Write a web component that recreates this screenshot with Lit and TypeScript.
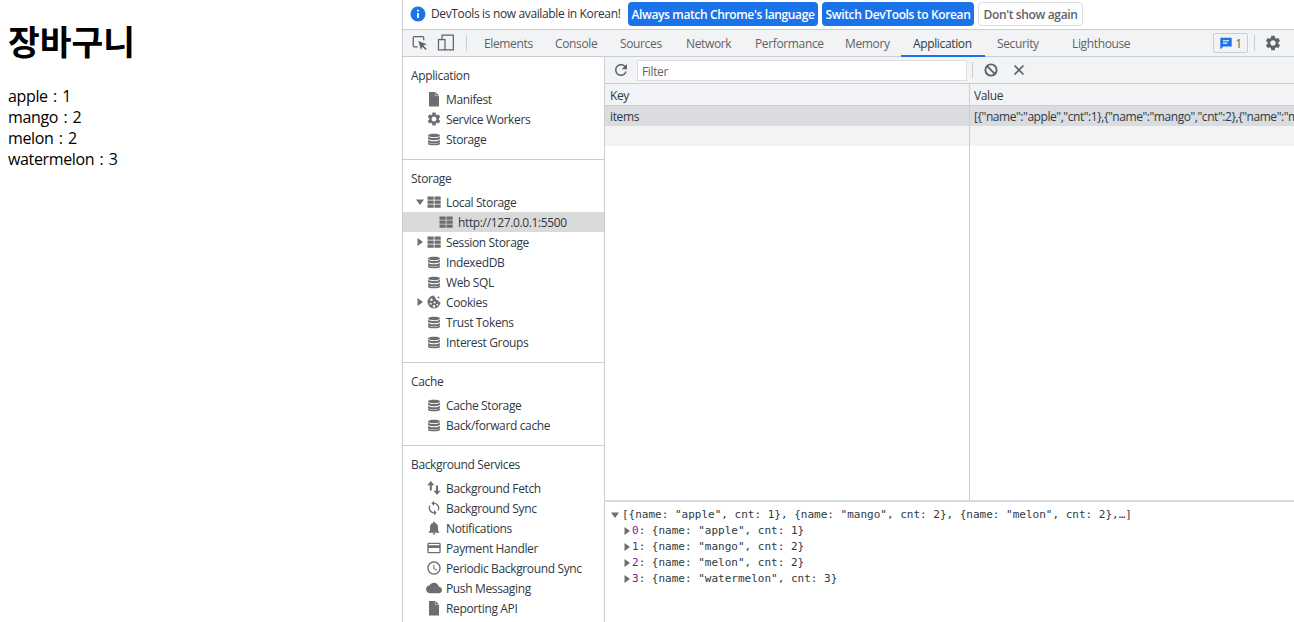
import { LitElement, html, css, svg } from "lit";
import { customElement } from "lit/decorators.js";

const paths: Record<string, any> = {
  doc: svg`<path d="M3 1h6.500L13 4.500V15.500H3z"/><path d="M9.300 1v3.700H13" fill="none" stroke="#fff" stroke-width=".5"/>`,
  db: svg`<g transform="translate(0 1.600) scale(1 .82)"><path d="M2 3.600C2 2.300 4.700 1.500 8 1.500s6 .8 6 2.100S11.300 5.700 8 5.700 2 4.900 2 3.600z"/><path d="M2 5.200C3 6.300 5.600 6.700 8 6.700s5-.4 6-1.500V7.300C14 8.600 11.300 9.400 8 9.400S2 8.600 2 7.300z"/><path d="M2 9C3 10.100 5.600 10.500 8 10.500s5-.4 6-1.500v2.100C14 12.400 11.300 13.200 8 13.200S2 12.400 2 11.100z"/><path d="M2 12.200C3 13.300 5.600 13.700 8 13.700s5-.4 6-1.500v1.400C14 14.900 11.300 15.500 8 15.500S2 14.900 2 13.600z"/></g>`,
  grid: svg`<path d="M1.500 2.500h6.200v3.200H1.500zM8.500 2.500h6.200v3.200H8.500zM1.500 6.500h6.200v3.200H1.500zM8.500 6.500h6.200v3.200H8.500zM1.500 10.500h6.200v3.200H1.500zM8.500 10.500h6.200v3.200H8.500z"/>`,
  cookie: svg`<path fill-rule="evenodd" d="M8 1.500a6.500 6.500 0 1 0 6.500 6.500c-1.500.2-2.500-.7-2.700-1.900C10.400 6.200 9.300 5 9.500 3.500 8.700 3.300 8.200 2.500 8 1.500zM5.500 4.500a1.200 1.200 0 1 1 0 2.400 1.200 1.200 0 0 1 0-2.400zM4.700 8.700a1 1 0 1 1 0 2 1 1 0 0 1 0-2zM8.500 7.500a1 1 0 1 1 0 2 1 1 0 0 1 0-2zM8 11a1.200 1.200 0 1 1 0 2.400A1.200 1.200 0 0 1 8 11zM11.300 9.800a.9.9 0 1 1 0 1.800.9.9 0 0 1 0-1.800z"/><circle cx="12.500" cy="3.500" r="1"/>`,
  updown: svg`<path d="M4.800 1 8.300 5.200H5.800V10.500H3.800V5.200H1.300zM11 15 7.500 10.800H10V5.500H12v5.300H14.500z"/>`,
  sync: svg`<path transform="scale(.667)" d="M12 4V1L8 5l4 4V6c3.310 0 6 2.690 6 6 0 1.010-.25 1.970-.7 2.800l1.460 1.460C19.540 15.030 20 13.570 20 12c0-4.420-3.580-8-8-8zm0 14c-3.310 0-6-2.690-6-6 0-1.010.25-1.970.7-2.800L5.240 7.740C4.460 8.970 4 10.430 4 12c0 4.420 3.580 8 8 8v3l4-4-4-4v3z"/>`,
  bell: svg`<path transform="scale(.667)" d="M12 22c1.100 0 2-.9 2-2h-4c0 1.100.9 2 2 2zm6-6v-5c0-3.070-1.630-5.640-4.500-6.320V4c0-.83-.67-1.500-1.500-1.500s-1.500.67-1.500 1.500v.68C7.640 5.360 6 7.920 6 11v5l-2 2v1h16v-1l-2-2z"/>`,
  card: svg`<path transform="scale(.667)" d="M20 4H4c-1.110 0-1.990.89-1.990 2L2 18c0 1.110.89 2 2 2h16c1.110 0 2-.89 2-2V6c0-1.110-.89-2-2-2zm0 14H4v-6h16v6zm0-10H4V6h16v2z"/>`,
  clock: svg`<path transform="scale(.667)" d="M11.990 2C6.470 2 2 6.480 2 12s4.470 10 9.990 10C17.520 22 22 17.520 22 12S17.520 2 11.990 2zM12 20c-4.420 0-8-3.580-8-8s3.580-8 8-8 8 3.580 8 8-3.580 8-8 8zm.5-13H11v6l5.250 3.150.75-1.230-4.500-2.670z"/>`,
  cloud: svg`<path transform="scale(.667)" d="M19.350 10.040C18.670 6.590 15.640 4 12 4 9.110 4 6.600 5.640 5.350 8.040 2.340 8.360 0 10.910 0 14c0 3.310 2.690 6 6 6h13c2.760 0 5-2.240 5-5 0-2.640-2.050-4.780-4.650-4.960z"/>`,
  gear: svg`<path transform="scale(.667)" d="M19.140 12.940c.04-.3.06-.61.06-.94 0-.32-.02-.64-.07-.94l2.030-1.580c.18-.14.23-.41.12-.61l-1.920-3.320c-.12-.22-.37-.29-.59-.22l-2.390.96c-.5-.38-1.030-.7-1.620-.94l-.36-2.540c-.04-.24-.24-.41-.48-.41h-3.840c-.24 0-.43.17-.47.41l-.36 2.540c-.59.24-1.130.57-1.620.94l-2.390-.96c-.22-.08-.47 0-.59.22L2.740 8.870c-.12.21-.08.47.12.61l2.030 1.580c-.05.3-.09.63-.09.94s.02.64.07.94l-2.030 1.580c-.18.14-.23.41-.12.61l1.920 3.320c.12.22.37.29.59.22l2.390-.96c.5.38 1.030.7 1.620.94l.36 2.540c.05.24.24.41.48.41h3.840c.24 0 .44-.17.47-.41l.36-2.540c.59-.24 1.130-.56 1.620-.94l2.390.96c.22.08.47 0 .59-.22l1.920-3.320c.12-.22.07-.47-.12-.61l-2.010-1.580zM12 15.600c-1.980 0-3.600-1.620-3.600-3.600s1.620-3.600 3.600-3.600 3.600 1.620 3.600 3.600-1.620 3.600-3.600 3.600z"/>`,
  refresh: svg`<path transform="scale(.667)" d="M17.650 6.350C16.200 4.900 14.210 4 12 4c-4.420 0-7.990 3.580-7.990 8s3.570 8 7.990 8c3.730 0 6.840-2.550 7.730-6h-2.080c-.82 2.330-3.040 4-5.650 4-3.310 0-6-2.690-6-6s2.690-6 6-6c1.660 0 3.140.69 4.220 1.780L13 11h7V4l-2.350 2.350z"/>`,
  block: svg`<circle cx="8" cy="8" r="5.600" fill="none" stroke="currentColor" stroke-width="1.900"/><path d="M4.200 4.200 11.800 11.800" stroke="currentColor" stroke-width="1.900"/>`,
  close: svg`<path d="M3.500 3.500 12.500 12.500M12.500 3.500 3.500 12.500" stroke="currentColor" stroke-width="1.700"/>`,
  inspect: svg`<path d="M6 11.500H3a1 1 0 0 1-1-1V3.400a1 1 0 0 1 1-1h7.300a1 1 0 0 1 1 1V5.500" fill="none" stroke="currentColor" stroke-width="1.100"/><path d="M6.500 6.200 14 9.200l-3 1.100 3 3-1 1-3-3-1.100 3z"/>`,
  device: svg`<path d="M4.500 4.900V1h10v13.200H7.100" fill="none" stroke="currentColor" stroke-width="1.100"/><path d="M1.300 4.900h5.800v9.300H1.300z" fill="none" stroke="currentColor" stroke-width="1.100"/>`,
  info: svg`<circle cx="8" cy="8" r="7.500" fill="#1a73e8"/><path d="M7.100 7h1.800v5H7.100zM7.100 3.800h1.800v1.800H7.100z" fill="#fff"/>`,
  issue: svg`<path d="M1.500 2h13v10H5L1.500 15z" fill="#1a73e8"/><path d="M4.500 4.800h7v1.300h-7zM4.500 7.500h5v1.300h-5z" fill="#fff"/>`,
};

const icon = (name: string, cls = "") =>
  html`<svg class="ic ${cls}" viewBox="0 0 16 16" fill="currentColor" aria-hidden="true">${paths[name]}</svg>`;

const sections = [
  { title: "Application", items: [
    { icon: "doc", label: "Manifest" },
    { icon: "gear", label: "Service Workers" },
    { icon: "db", label: "Storage" },
  ]},
  { title: "Storage", items: [
    { icon: "grid", label: "Local Storage", arrow: "down" },
    { icon: "grid", label: "http://127.0.0.1:5500", child: true, selected: true },
    { icon: "grid", label: "Session Storage", arrow: "right" },
    { icon: "db", label: "IndexedDB" },
    { icon: "db", label: "Web SQL" },
    { icon: "cookie", label: "Cookies", arrow: "right" },
    { icon: "db", label: "Trust Tokens" },
    { icon: "db", label: "Interest Groups" },
  ]},
  { title: "Cache", items: [
    { icon: "db", label: "Cache Storage" },
    { icon: "db", label: "Back/forward cache" },
  ]},
  { title: "Background Services", items: [
    { icon: "updown", label: "Background Fetch" },
    { icon: "sync", label: "Background Sync" },
    { icon: "bell", label: "Notifications" },
    { icon: "card", label: "Payment Handler" },
    { icon: "clock", label: "Periodic Background Sync" },
    { icon: "cloud", label: "Push Messaging" },
    { icon: "doc", label: "Reporting API" },
  ]},
] as { title: string; items: { icon: string; label: string; arrow?: string; child?: boolean; selected?: boolean }[] }[];

const tabs = [
  ["Elements", 71], ["Console", 65], ["Sources", 66], ["Network", 69], ["Performance", 90],
  ["Memory", 68], ["Application", 84], ["Security", 75], ["Lighthouse", 82],
] as [string, number][];

const cart = [["apple", 1], ["mango", 2], ["melon", 2], ["watermelon", 3]];

@customElement("app-root")
export class AppRoot extends LitElement {
  static styles = css`
    :host { display: block; width: 1294px; height: 622px; overflow: hidden; background: #fff; }
    * { box-sizing: border-box; }
    .page { display: grid; grid-template-columns: 403px 891px; height: 622px; }
    .site { padding: 19px 8px 0; font-family: "Open Sans", sans-serif; color: #000; }
    .site h1 { margin: 0 0 25px; font: 700 34.500px/42px "Noto Sans CJK KR", sans-serif; letter-spacing: 0; }
    .site div { font-size: 16px; line-height: 21px; letter-spacing: -.35px; word-spacing: 1.500px; }

    .dt { display: flex; flex-direction: column; height: 622px; border-left: 1px solid #cbcdd1; margin-left: -1px;
      font-family: "Open Sans", sans-serif; font-size: 12px; color: #303942; min-width: 0; width: 892px; overflow: hidden; letter-spacing: -.36px; }
    .ic { width: 16px; height: 16px; flex: none; display: block; color: #6e6e6e; }

    .infobar { height: 30px; flex: none; display: flex; align-items: flex-start; padding: 2px 0 0 7px; gap: 4px; border-bottom: 1px solid #cacdd1; }
    .info-ic { width: 16px; height: 16px; margin-top: 4px; }
    .info-text { width: 194px; line-height: 24px; padding-left: 1px; color: #333; white-space: nowrap; }
    .btn { height: 24px; border-radius: 4px; display: flex; align-items: center; justify-content: center; font-weight: 600; white-space: nowrap; background: #1a73e8; color: #fff; }
    .btn.b1 { width: 190px; }
    .btn.b2 { width: 152px; }
    .btn.b3 { width: 105px; background: #fff; color: #5f6368; border: 1px solid #dadce0; }

    .tabbar { height: 27px; flex: none; display: flex; align-items: stretch; background: #f1f3f4; border-bottom: 1px solid #cacdd1; }
    .tb-icons { width: 69px; display: flex; align-items: center; padding-left: 8px; gap: 8px; flex: none; }
    .tb-icons .ic { width: 18px; height: 18px; color: #5f6368; }
    .tb-icons .sep { width: 1px; height: 16px; background: #cacdd1; margin-left: 3px; }
    .tab { display: flex; align-items: center; padding-left: 12px; color: #5f6368; white-space: nowrap; flex: none; margin-bottom: -1px; border-bottom: 2px solid transparent; padding-top: 2px; }
    .tab.active { color: #303942; border-bottom-color: #1a73e8; }
    .tb-right { margin-left: 71px; display: flex; align-items: center; }
    .issues { width: 35px; height: 20px; border: 1px solid #cacdd1; border-radius: 2px; display: flex; align-items: center; justify-content: center; gap: 2px; color: #5f6368; }
    .issues .ic { width: 14px; height: 14px; }
    .tb-right .sep { width: 1px; height: 16px; background: #cacdd1; margin: 0 9px 0 6px; }
    .gear { width: 18px; height: 18px; color: #5f6368; }

    .body { flex: 1; display: grid; grid-template-columns: 202px 1fr; min-height: 0; }
    .side { border-right: 1px solid #cacdd1; overflow: hidden; }
    .sec { padding: 8px 0 10px; border-bottom: 1px solid #cacdd1; }
    .sec:last-child { border-bottom: 0; }
    .sec-t { height: 20px; line-height: 22px; padding-left: 8px; margin-bottom: 4px; color: #303942; }
    .row { height: 20px; display: flex; align-items: center; padding-left: 13px; white-space: nowrap; color: #303942; }
    .row.child { padding-left: 35px; }
    .row.sel { background: #dadada; }
    .row .ic { width: 16px; height: 16px; margin-right: 4px; }
    .row .tw { width: 8px; height: 8px; margin-right: 2px; flex: none; display: block; color: #6e6e6e; }
    .row .tw.none { visibility: hidden; }

    .main { display: flex; flex-direction: column; min-width: 0; }
    .tool { height: 27px; flex: none; display: flex; align-items: center; background: #f1f3f4; border-bottom: 1px solid #cacdd1; padding-left: 7px; }
    .tool .ic { color: #5f6368; }
    .tool .ic.rf { width: 18px; height: 18px; }
    .filter { width: 330px; height: 21px; margin-left: 7px; background: #fff; border: 1px solid #dadce0; padding: 0 4px; line-height: 22px; color: #5f6368; }
    .tool .sep { width: 1px; height: 16px; background: #cacdd1; margin: 0 10px 0 5px; }
    .tool .x { margin-left: 12px; }
    .grid { flex: 1; display: grid; grid-template-columns: 364px 1fr; grid-template-rows: 22px 20px 20px 1fr; min-height: 0; }
    .cell { padding-left: 5px; white-space: nowrap; overflow: hidden; line-height: 22px; min-width: 0; }
    .cell.v { border-left: 1px solid #cacdd1; padding-left: 4px; }
    .cell.h { background: #f1f3f4; border-bottom: 1px solid #cacdd1; line-height: 23px; }
    .cell.s { background: #dadce0; }
    .cell.s.v { letter-spacing: -.44px; }
    .cell.a { background: #f1f3f4; }
    .preview { height: 122px; flex: none; border-top: 2px solid #d6d8dc; padding: 5px 0 0 6px; font: 11px/16px "DejaVu Sans Mono", monospace; color: #303942; white-space: nowrap; letter-spacing: 0; }
    .p-line { display: flex; align-items: center; height: 16px; white-space: pre; }
    .p-line:first-child svg { margin-right: 3px; }
    .p-line.c { padding-left: 12px; }
    .p-line svg { width: 8px; height: 8px; margin-right: 1px; flex: none; color: #6e6e6e; }
    .k { color: #881391; }
  `;

  tw(dir?: string) {
    if (!dir) return html`<svg class="tw none" viewBox="0 0 8 8"></svg>`;
    return html`<svg class="tw" viewBox="0 0 8 8" fill="currentColor"><path d=${dir === "down" ? "M0 1.500h8L4 7z" : "M1.500 0 7 4l-5.500 4z"}></path></svg>`;
  }

  render() {
    return html`<div class="page">
      <div class="site">
        <h1>장바구니</h1>
        ${cart.map(([n, c]) => html`<div>${n} : ${c}</div>`)}
      </div>
      <div class="dt">
        <div class="infobar">
          <svg class="info-ic" viewBox="0 0 16 16">${paths.info}</svg>
          <span class="info-text">DevTools is now available in Korean!</span>
          <div class="btn b1">Always match Chrome's language</div>
          <div class="btn b2">Switch DevTools to Korean</div>
          <div class="btn b3">Don't show again</div>
        </div>
        <div class="tabbar">
          <div class="tb-icons">${icon("inspect")}${icon("device")}<span class="sep"></span></div>
          ${tabs.map(([t, w]) => html`<div class="tab ${t === "Application" ? "active" : ""}" style="width:${w}px">${t}</div>`)}
          <div class="tb-right">
            <div class="issues"><svg class="ic" viewBox="0 0 16 16">${paths.issue}</svg>1</div>
            <span class="sep"></span>
            ${icon("gear", "gear")}
          </div>
        </div>
        <div class="body">
          <div class="side">
            ${sections.map((s) => html`<div class="sec">
              <div class="sec-t">${s.title}</div>
              ${s.items.map((i) => html`<div class="row ${i.child ? "child" : ""} ${i.selected ? "sel" : ""}">
                ${i.child ? "" : this.tw(i.arrow)}${icon(i.icon)}<span>${i.label}</span>
              </div>`)}
            </div>`)}
          </div>
          <div class="main">
            <div class="tool">
              ${icon("refresh", "rf")}
              <div class="filter">Filter</div>
              <span class="sep"></span>
              ${icon("block")}
              ${icon("close", "x")}
            </div>
            <div class="grid">
              <div class="cell h">Key</div><div class="cell h v">Value</div>
              <div class="cell s">items</div><div class="cell s v">[{"name":"apple","cnt":1},{"name":"mango","cnt":2},{"name":"melon","cnt":2},{"name":"watermelon","cnt":3}]</div>
              <div class="cell a"></div><div class="cell a v"></div>
              <div class="cell"></div><div class="cell v"></div>
            </div>
            <div class="preview"><div class="p-line">${this.tw("down")}<span>[{name: "apple", cnt: 1}, {name: "mango", cnt: 2}, {name: "melon", cnt: 2},…]</span></div>${cart.map(([n, c], i) => html`<div class="p-line c">${this.tw("right")}<span><span class="k">${i}</span>: {name: "${n}", cnt: ${c}}</span></div>`)}</div>
          </div>
        </div>
      </div>
    </div>`;
  }
}
